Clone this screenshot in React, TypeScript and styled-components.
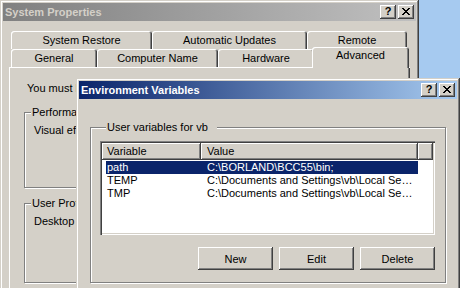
import styled, { createGlobalStyle, css } from "styled-components";

type TTab = { label: string; width: number; selected?: boolean };
type TColumn = { label: string; width: number };
type TVariable = { name: string; value: string };

const tabRows: TTab[][] = [
  [
    { label: "System Restore", width: 141 },
    { label: "Automatic Updates", width: 155 },
    { label: "Remote", width: 100 },
  ],
  [
    { label: "General", width: 86 },
    { label: "Computer Name", width: 121 },
    { label: "Hardware", width: 96 },
    { label: "Advanced", width: 93, selected: true },
  ],
];

const columns: TColumn[] = [
  { label: "Variable", width: 99 },
  { label: "Value", width: 217 },
];

const userVariables: TVariable[] = [
  { name: "path", value: "C:\\BORLAND\\BCC55\\bin;" },
  { name: "TEMP", value: "C:\\Documents and Settings\\vb\\Local Settings\\Temp" },
  { name: "TMP", value: "C:\\Documents and Settings\\vb\\Local Settings\\Temp" },
];

const CloseGlyph = () => (
  <svg width="8" height="7" viewBox="0 0 8 7" shapeRendering="crispEdges">
    <path
      fill="#000"
      d="M0 0h2v1H0zM6 0h2v1H6zM1 1h2v1H1zM5 1h2v1H5zM2 2h4v1H2zM3 3h2v1H3zM2 4h4v1H2zM1 5h2v1H1zM5 5h2v1H5zM0 6h2v1H0zM6 6h2v1H6z"
    />
  </svg>
);

const Caption = ({ title, active }: { title: string; active?: boolean }) => (
  <TitleBar $active={active}>
    <Title>{title}</Title>
    <CaptionButtons>
      <CaptionButton>?</CaptionButton>
      <CaptionButton>
        <CloseGlyph />
      </CaptionButton>
    </CaptionButtons>
  </TitleBar>
);

const App = () => {
  return (
    <>
      <GlobalStyle />
      <Desktop>
        <Window $x={0} $y={0} $w={419} $h={330}>
          <Caption title="System Properties" />
          <WindowBody>
            <TabStrip>
              {tabRows.map((row, i) => (
                <TabRow key={i}>
                  {row.map((tab) => (
                    <Tab key={tab.label} $w={tab.width} $selected={tab.selected}>
                      {tab.label}
                    </Tab>
                  ))}
                </TabRow>
              ))}
            </TabStrip>
            <TabPanel>
              <Note>
                You must be logged on as an Administrator to make most of these changes.
              </Note>
              <Group $h={82} $top={11}>
                <Legend>Performance</Legend>
                <GroupText>
                  Visual effects, processor scheduling, memory usage, and virtual memory
                </GroupText>
              </Group>
              <Group $h={86} $top={9}>
                <Legend>User Profiles</Legend>
                <GroupText>Desktop settings related to your logon</GroupText>
              </Group>
            </TabPanel>
          </WindowBody>
        </Window>

        <Window $x={76} $y={78} $w={384} $h={260}>
          <Caption title="Environment Variables" active />
          <DialogBody>
            <EnvGroup>
              <EnvLegend>User variables for vb</EnvLegend>
              <ListView>
                <ListHeader>
                  {columns.map((col) => (
                    <HeaderCell key={col.label} $w={col.width}>
                      {col.label}
                    </HeaderCell>
                  ))}
                  <HeaderFiller />
                </ListHeader>
                <ListRows>
                  {userVariables.map((v, i) => (
                    <ListRow key={v.name} $selected={i === 0}>
                      <NameCell>{v.name}</NameCell>
                      <ValueCell>{v.value}</ValueCell>
                    </ListRow>
                  ))}
                </ListRows>
              </ListView>
              <ButtonRow>
                <Button>New</Button>
                <Button>Edit</Button>
                <Button>Delete</Button>
              </ButtonRow>
            </EnvGroup>
          </DialogBody>
        </Window>
      </Desktop>
    </>
  );
};

const GlobalStyle = createGlobalStyle`
  html, body {
    margin: 0;
    padding: 0;
  }
  body {
    background: #a6caf0;
    font-family: "Liberation Sans", Arial, sans-serif;
    font-size: 11px;
    line-height: 13px;
    color: #000;
    overflow: hidden;
  }
`;

const raised = css`
  background: #d4d0c8;
  box-shadow: inset -1px -1px #404040, inset 1px 1px #ffffff,
    inset -2px -2px #808080, inset 2px 2px #d4d0c8;
`;

const Desktop = styled.div`
  position: relative;
  width: 460px;
  height: 288px;
  overflow: hidden;
  background: #a6caf0;
`;

const Window = styled.div<{ $x: number; $y: number; $w: number; $h: number }>`
  position: absolute;
  left: ${(p) => p.$x}px;
  top: ${(p) => p.$y}px;
  width: ${(p) => p.$w}px;
  height: ${(p) => p.$h}px;
  box-sizing: border-box;
  padding: 3px;
  background: #d4d0c8;
  box-shadow: inset -1px -1px #404040, inset 1px 1px #d4d0c8,
    inset -2px -2px #808080, inset 2px 2px #ffffff;
  display: flex;
  flex-direction: column;
`;

const TitleBar = styled.div<{ $active?: boolean }>`
  flex: none;
  height: 18px;
  display: flex;
  align-items: center;
  padding: 0 2px;
  background: ${(p) =>
    p.$active
      ? "linear-gradient(to right, #0a246a, #a6caf0)"
      : "linear-gradient(to right, #808080, #c0c0c0)"};
  color: ${(p) => (p.$active ? "#ffffff" : "#d4d0c8")};
  font-weight: bold;
`;

const Title = styled.span`
  flex: 1;
  white-space: nowrap;
  overflow: hidden;
`;

const CaptionButtons = styled.div`
  display: flex;
  gap: 2px;
`;

const CaptionButton = styled.div`
  ${raised}
  width: 16px;
  height: 14px;
  box-sizing: border-box;
  display: flex;
  align-items: center;
  justify-content: center;
  color: #000;
  font-weight: bold;
  font-size: 11px;
  padding-bottom: 1px;
`;

const WindowBody = styled.div`
  flex: 1;
  display: flex;
  flex-direction: column;
  padding: 10px 6px 0;
  min-height: 0;
`;

const TabStrip = styled.div`
  display: flex;
  flex-direction: column;
  padding: 0 2px;
`;

const TabRow = styled.div`
  display: flex;
  height: 18px;
`;

const Tab = styled.div<{ $w: number; $selected?: boolean }>`
  flex: none;
  width: ${(p) => p.$w}px;
  box-sizing: border-box;
  display: flex;
  align-items: center;
  justify-content: center;
  white-space: nowrap;
  background: #d4d0c8;
  border-radius: 3px 3px 0 0;
  box-shadow: inset 1px 1px #ffffff, inset -1px 0 #404040, inset -2px 0 #808080;

  ${(p) =>
    p.$selected &&
    css`
      position: relative;
      z-index: 1;
      width: ${p.$w + 4}px;
      height: 21px;
      margin: -2px -2px 0;
      align-items: flex-start;
      padding-top: 2px;
    `}
`;

const TabPanel = styled.div`
  flex: 1;
  min-height: 0;
  overflow: hidden;
  background: #d4d0c8;
  box-shadow: inset 1px 1px #ffffff, inset -1px -1px #404040,
    inset -2px -2px #808080;
  padding: 15px 10px 0 15px;
`;

const Note = styled.div`
  margin-left: 3px;
  white-space: nowrap;
`;

const Group = styled.fieldset<{ $h: number; $top: number }>`
  margin: ${(p) => p.$top}px 0 0;
  padding: 0 8px;
  height: ${(p) => p.$h}px;
  box-sizing: border-box;
  min-width: 0;
  border: 1px solid #808080;
  box-shadow: inset 1px 1px #ffffff, 1px 1px #ffffff;
`;

const Legend = styled.legend`
  margin-left: -2px;
  padding: 0 2px 0 1px;
  background: #d4d0c8;
  white-space: nowrap;
`;

const GroupText = styled.div`
  margin: 5px 0 0 1px;
  white-space: nowrap;
`;

const DialogBody = styled.div`
  flex: 1;
  padding: 22px 11px 0;
`;

const EnvGroup = styled.fieldset`
  margin: 0;
  padding: 0 10px 12px 9px;
  min-width: 0;
  border: 1px solid #808080;
  box-shadow: inset 1px 1px #ffffff, 1px 1px #ffffff;
`;

const EnvLegend = styled.legend`
  margin-left: 6px;
  padding: 0 9px 0 1px;
  background: #d4d0c8;
  white-space: nowrap;
`;

const ListView = styled.div`
  margin-top: 7px;
  height: 94px;
  box-sizing: border-box;
  padding: 2px;
  background: #ffffff;
  box-shadow: inset 1px 1px #808080, inset 2px 2px #404040,
    inset -1px -1px #ffffff, inset -2px -2px #d4d0c8;
  overflow: hidden;
`;

const ListHeader = styled.div`
  display: flex;
  height: 17px;
`;

const HeaderCell = styled.div<{ $w: number }>`
  ${raised}
  flex: none;
  width: ${(p) => p.$w}px;
  box-sizing: border-box;
  padding-left: 5px;
  line-height: 16px;
  white-space: nowrap;
  & + & {
    padding-left: 6px;
  }
`;

const HeaderFiller = styled.div`
  ${raised}
  flex: 1;
`;

const ListRows = styled.div`
  padding-top: 1px;
`;

const ListRow = styled.div<{ $selected?: boolean }>`
  display: flex;
  width: 312px;
  height: 13px;
  margin-left: 4px;
  background: ${(p) => (p.$selected ? "#0a246a" : "transparent")};
  color: ${(p) => (p.$selected ? "#ffffff" : "#000000")};
`;

const NameCell = styled.div`
  flex: none;
  width: 95px;
  box-sizing: border-box;
  padding-left: 1px;
  white-space: nowrap;
`;

const ValueCell = styled.div`
  flex: 1;
  min-width: 0;
  padding: 0 5px 0 6px;
  white-space: nowrap;
  overflow: hidden;
  text-overflow: ellipsis;
`;

const ButtonRow = styled.div`
  display: flex;
  justify-content: flex-end;
  gap: 6px;
  margin-top: 12px;
`;

const Button = styled.button`
  ${raised}
  width: 75px;
  height: 23px;
  border: none;
  padding: 0;
  font: 11px "Liberation Sans", Arial, sans-serif;
  color: #000;
`;

export default App;
